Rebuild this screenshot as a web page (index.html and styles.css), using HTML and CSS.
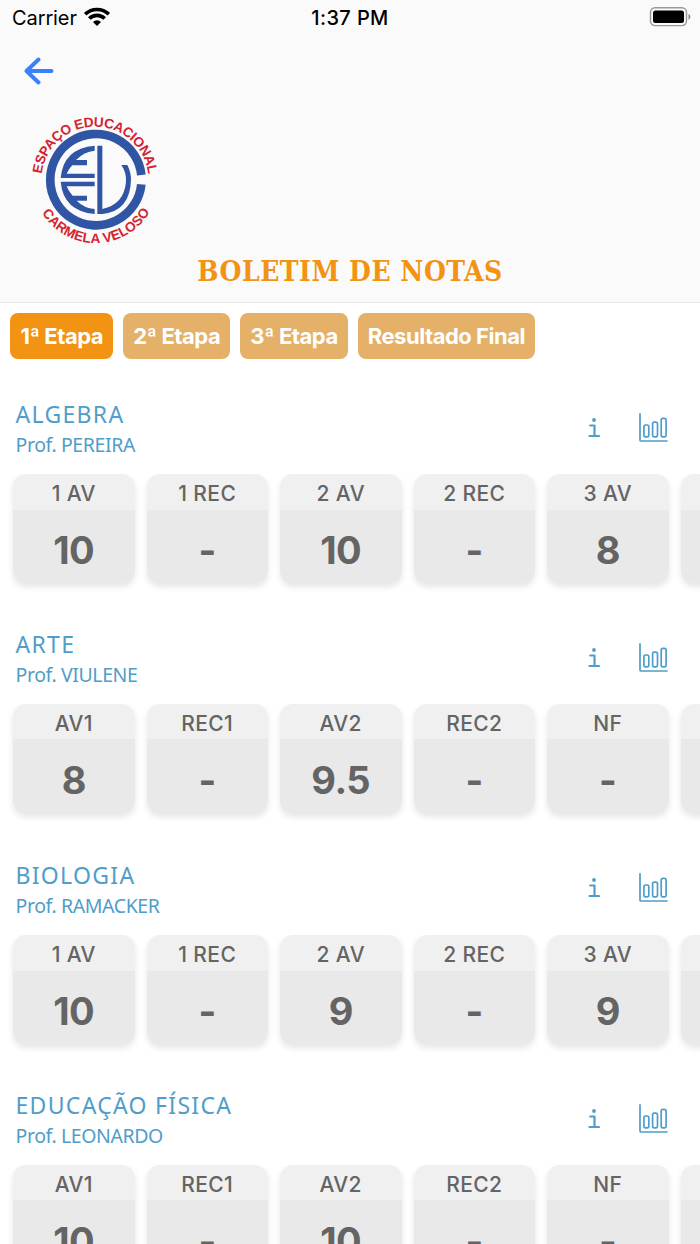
FILE: index.html
```html
<!DOCTYPE html>
<html lang="pt-BR">
<head>
    <meta charset="UTF-8">
    <meta name="viewport" content="width=device-width, initial-scale=1.0">
    <title>Boletim de Notas</title>
    <link rel="stylesheet" href="styles.css">
</head>
<body>
    <header class="header">
        <div class="status-bar">
            <div class="carrier">
                <span>Carrier</span>
                <svg width="26" height="20" viewBox="0 0 26 20">
                    <path d="M1.2 7.2a17 17 0 0 1 23.6 0M5.3 11.5a11 11 0 0 1 15.4 0" fill="none" stroke="#000" stroke-width="3.6"/>
                    <path d="M13 19l-4-4a5.6 5.6 0 0 1 8 0z"/>
                </svg>
            </div>
            <div class="time">1:37 PM</div>
            <svg class="battery" width="42" height="20" viewBox="0 0 42 20">
                <rect x="1.5" y="0.8" width="36" height="17.8" rx="4.5" fill="none" stroke="#999" stroke-width="1.4"/>
                <rect x="4" y="3.6" width="31" height="12.4" rx="2.5"/>
                <path d="M39.5 7c2.4.7 2.4 5 0 5.7z" fill="#888"/>
            </svg>
        </div>
        <a class="back" href="#" aria-label="Voltar">
            <svg width="30" height="28" viewBox="0 0 30 28">
                <path d="M14.5 2.5L2.5 14l12 11.500M2.5 14H27.5" fill="none" stroke="#3a80fb" stroke-width="3.9" stroke-linecap="round" stroke-linejoin="round"/>
            </svg>
        </a>
        <svg class="logo" width="150" height="150" viewBox="0 0 450 450">
            <defs>
                <path id="arc-top" d="M64 226a161 161 0 0 1 322 0"/>
                <path id="arc-bottom" d="M39 226a188 188 0 0 0 376 0"/>
            </defs>
            <g fill="#2f55a4">
                <path d="M364 210A137 137 0 1 0 364 238" fill="none" stroke="#2f55a4" stroke-width="26"/>
                <path d="M224 122v15q-32 3-56 28h33v16h-44q-12 12-17 25h84v13H122Q130 130 224 122z"/>
                <path d="M224 327v-15q-32-3-54-25h31v-15h-43q-12-12-18-28h84v-14H122Q130 318 224 327z"/>
                <path d="M232 122h15v190q65-14 71-81 2-28-14-51h18q11 22 11 43-2 96-86 104h-15z"/>
            </g>
            <g class="logo-text">
                <text><textPath href="#arc-top" startOffset="19" textLength="468">ESPAÇO EDUCACIONAL</textPath></text>
                <text><textPath href="#arc-bottom" startOffset="102" textLength="390">CARMELA VELOSO</textPath></text>
            </g>
        </svg>
        <h1>BOLETIM DE NOTAS</h1>
    </header>

    <nav class="tabs">
        <button class="tab active">1ª Etapa</button>
        <button class="tab">2ª Etapa</button>
        <button class="tab">3ª Etapa</button>
        <button class="tab">Resultado Final</button>
    </nav>

    <svg class="symbols" width="0" height="0">
        <symbol id="info" viewBox="0 0 12 20">
            <circle cx="6" cy="2" r="1.9" fill="#509dc9"/>
            <path d="M2.2 7.5H6.5V18M1.5 18H11" fill="none" stroke="#509dc9" stroke-width="2.2" stroke-linecap="round" stroke-linejoin="round"/>
        </symbol>
        <symbol id="chart" viewBox="0 0 30 30">
            <g fill="none" stroke="#509dc9" stroke-width="1.7" stroke-linecap="round">
                <path d="M2 .9V26.900q0 1.100 1.100 1.100H29"/>
                <rect x="5.9" y="12" width="4.900" height="11.800" rx="1.700"/>
                <rect x="14.600" y="9.100" width="4.900" height="14.700" rx="1.700"/>
                <rect x="23.200" y="5.400" width="4.900" height="18.400" rx="1.700"/>
            </g>
        </symbol>
    </svg>

    <main>
        <section class="subject">
            <div class="subject-head">
                <div>
                    <h2>ALGEBRA</h2>
                    <p>Prof. PEREIRA</p>
                </div>
                <div class="actions">
                    <svg width="12" height="20"><use href="#info"/></svg>
                    <svg width="30" height="30"><use href="#chart"/></svg>
                </div>
            </div>
            <div class="grades">
                <div class="grade"><span>1 AV</span><strong>10</strong></div>
                <div class="grade"><span>1 REC</span><strong>-</strong></div>
                <div class="grade"><span>2 AV</span><strong>10</strong></div>
                <div class="grade"><span>2 REC</span><strong>-</strong></div>
                <div class="grade"><span>3 AV</span><strong>8</strong></div>
                <div class="grade"><span></span><strong></strong></div>
            </div>
        </section>

        <section class="subject">
            <div class="subject-head">
                <div>
                    <h2>ARTE</h2>
                    <p>Prof. VIULENE</p>
                </div>
                <div class="actions">
                    <svg width="12" height="20"><use href="#info"/></svg>
                    <svg width="30" height="30"><use href="#chart"/></svg>
                </div>
            </div>
            <div class="grades">
                <div class="grade"><span>AV1</span><strong>8</strong></div>
                <div class="grade"><span>REC1</span><strong>-</strong></div>
                <div class="grade"><span>AV2</span><strong>9.5</strong></div>
                <div class="grade"><span>REC2</span><strong>-</strong></div>
                <div class="grade"><span>NF</span><strong>-</strong></div>
                <div class="grade"><span></span><strong></strong></div>
            </div>
        </section>

        <section class="subject">
            <div class="subject-head">
                <div>
                    <h2>BIOLOGIA</h2>
                    <p>Prof. RAMACKER</p>
                </div>
                <div class="actions">
                    <svg width="12" height="20"><use href="#info"/></svg>
                    <svg width="30" height="30"><use href="#chart"/></svg>
                </div>
            </div>
            <div class="grades">
                <div class="grade"><span>1 AV</span><strong>10</strong></div>
                <div class="grade"><span>1 REC</span><strong>-</strong></div>
                <div class="grade"><span>2 AV</span><strong>9</strong></div>
                <div class="grade"><span>2 REC</span><strong>-</strong></div>
                <div class="grade"><span>3 AV</span><strong>9</strong></div>
                <div class="grade"><span></span><strong></strong></div>
            </div>
        </section>

        <section class="subject">
            <div class="subject-head">
                <div>
                    <h2>EDUCAÇÃO FÍSICA</h2>
                    <p>Prof. LEONARDO</p>
                </div>
                <div class="actions">
                    <svg width="12" height="20"><use href="#info"/></svg>
                    <svg width="30" height="30"><use href="#chart"/></svg>
                </div>
            </div>
            <div class="grades">
                <div class="grade"><span>AV1</span><strong>10</strong></div>
                <div class="grade"><span>REC1</span><strong>-</strong></div>
                <div class="grade"><span>AV2</span><strong>10</strong></div>
                <div class="grade"><span>REC2</span><strong>-</strong></div>
                <div class="grade"><span>NF</span><strong>-</strong></div>
                <div class="grade"><span></span><strong></strong></div>
            </div>
        </section>
    </main>
</body>
</html>
```
FILE: styles.css
```css
* {
    box-sizing: border-box;
}

body {
    margin: 0;
    height: 1244px;
    overflow: hidden;
    background-color: #ffffff;
    font-family: Inter, sans-serif;
}

svg {
    display: block;
}

.header {
    height: 303px;
    background-color: #fafafa;
    border-bottom: 1px solid #e6e6e6;
}

.status-bar {
    display: grid;
    grid-template-columns: 1fr auto 1fr;
    align-items: center;
    height: 36px;
    padding: 0 9px 0 12px;
    font-size: 20px;
}

.carrier {
    display: flex;
    align-items: center;
    gap: 7px;
    letter-spacing: -0.1px;
}

.carrier svg {
    margin-top: -3px;
}

.time {
    margin-left: -3px;
    font-weight: 500;
    letter-spacing: 0.4px;
}

.battery {
    justify-self: end;
    margin-top: -2px;
}

.back {
    display: block;
    width: 30px;
    margin: 21px 0 0 24px;
}

.logo {
    margin: 20px 0 0 20px;
}

.logo-text {
    fill: #d3232f;
    font-family: "Liberation Sans", Arial, sans-serif;
    font-size: 41px;
    font-weight: bold;
}

h1 {
    margin: 0;
    text-align: center;
    font-family: "DejaVu Serif Condensed", "DejaVu Serif", serif;
    font-size: 28px;
    font-weight: bold;
    line-height: 33px;
    letter-spacing: 0.5px;
    color: #f39314;
}

.tabs {
    display: flex;
    gap: 10px;
    height: 67px;
    padding: 10.4px 10px 10px 10.4px;
}

.tab {
    height: 46px;
    padding: 0 10px;
    border: none;
    border-radius: 8px;
    background-color: #e5b068;
    color: #ffffff;
    font-family: inherit;
    font-size: 22px;
    font-weight: 700;
    letter-spacing: -0.47px;
    white-space: nowrap;
}

.tab.active {
    background-color: #f39314;
}

.subject {
    height: 230.4px;
    padding: 29px 0 0 13px;
}

.subject-head {
    display: flex;
    justify-content: space-between;
    height: 75px;
    padding: 0 32.5px 0 2.5px;
    font-family: "Noto Sans", sans-serif;
    color: #509dc9;
}

h2 {
    margin: 0;
    font-size: 23px;
    font-weight: 400;
    line-height: 30px;
    letter-spacing: 1.3px;
}

.subject-head p {
    margin: 0;
    font-size: 19.5px;
    font-weight: 400;
    line-height: 31px;
    letter-spacing: -0.4px;
}

.actions {
    display: flex;
    align-items: center;
    gap: 38px;
    height: 30px;
    margin-top: 13.5px;
}

.grades {
    display: flex;
    gap: 12px;
    overflow: hidden;
    padding-bottom: 12px;
    margin-left: -13px;
    padding-left: 13px;
}

.grade {
    flex: 0 0 121.5px;
    height: 110px;
    border-radius: 13px;
    background: linear-gradient(#f0f0f0 35.5px, #e9e9e9 35.5px);
    box-shadow: 0 3px 6px rgba(0, 0, 0, 0.1);
    color: #646464;
    text-align: center;
}

.grade span,
.grade strong {
    display: block;
}

.grade span {
    height: 36px;
    font-size: 21px;
    font-weight: 500;
    line-height: 39px;
    letter-spacing: 0.4px;
}

.grade strong {
    font-size: 38px;
    font-weight: 700;
    line-height: 80px;
    letter-spacing: -0.5px;
}

.symbols {
    position: absolute;
}
```
